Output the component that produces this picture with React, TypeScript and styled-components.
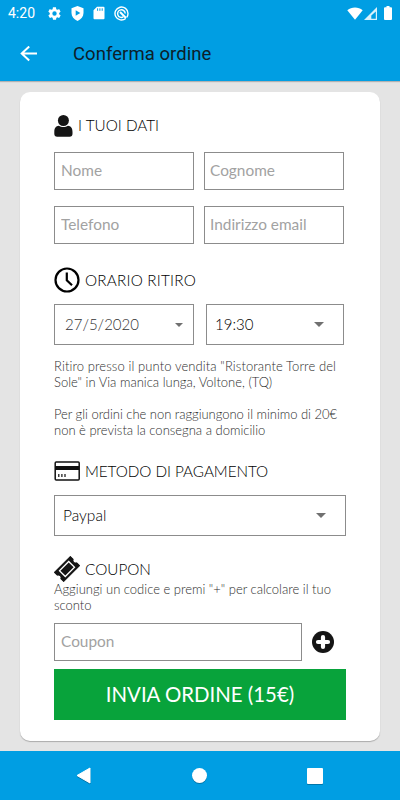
import React from 'react';
import styled, { createGlobalStyle } from 'styled-components';

const GlobalStyle = createGlobalStyle`
  *, *::before, *::after { box-sizing: border-box; }
  body { margin: 0; background: #e4e4e4; }
  input, button { margin: 0; border-radius: 0; font-family: inherit; }
  svg { display: block; flex: none; }
`;

const Screen = styled.div`
  width: 400px;
  height: 800px;
  display: flex;
  flex-direction: column;
  background: #e4e4e4;
  font-family: Lato, sans-serif;
  font-weight: 300;
  overflow: hidden;
`;

const StatusBar = styled.div`
  height: 26px;
  flex: none;
  display: flex;
  align-items: center;
  justify-content: space-between;
  padding: 0 8px;
  background: #009ee3;
  color: #fff;
`;

const StatusGroup = styled.div<{ $gap: number }>`
  display: flex;
  align-items: center;
  gap: ${({ $gap }) => $gap}px;
`;

const Clock = styled.span`
  width: 30px;
  font: 400 14px/16px Roboto, sans-serif;
`;

const AppBar = styled.header`
  height: 55px;
  flex: none;
  display: flex;
  align-items: center;
  gap: 36px;
  padding: 0 20px;
  background: #009ee3;
  box-shadow: 0 1px 1px rgba(0, 0, 0, 0.22);
`;

const Title = styled.h1`
  margin: 0;
  font: 400 18.500px/24px Roboto, sans-serif;
  letter-spacing: 0.05px;
  color: #0d2029;
`;

const Main = styled.main`
  flex: 1;
  padding: 11px 20px 10px;
`;

const Card = styled.form`
  height: 649px;
  padding: 20px 34px 0;
  display: flex;
  flex-direction: column;
  background: #fff;
  border-radius: 10px;
  box-shadow: 0 1px 1px rgba(0, 0, 0, 0.25);
`;

const Section = styled.section<{ $top?: number }>`
  margin-top: ${({ $top = 0 }) => $top}px;
`;

const Heading = styled.h2<{ $height?: number; $spacing?: number }>`
  margin: 0;
  height: ${({ $height = 26 }) => $height}px;
  display: flex;
  align-items: center;
  gap: 5px;
  font-size: 15.300px;
  font-weight: 300;
  line-height: 20px;
  letter-spacing: ${({ $spacing = 0 }) => $spacing}px;
  color: #000;
`;

const HeadingText = styled.span`
  padding-bottom: 1px;
`;

const FieldGrid = styled.div`
  display: grid;
  grid-template-columns: 140px 140px;
  gap: 16px 10px;
  margin-top: 13px;
`;

const Input = styled.input<{ $left?: number }>`
  width: 100%;
  height: 38px;
  padding: 0 5px 3px ${({ $left = 6 }) => $left}px;
  border: 1px solid #8c8c8c;
  background: #fff;
  font-size: 15.400px;
  font-weight: 400;
  outline: none;
  &::placeholder { color: #a2a2a2; opacity: 1; }
`;

const SelectRow = styled.div<{ $columns: string }>`
  display: grid;
  grid-template-columns: ${({ $columns }) => $columns};
  gap: 12px;
  margin-top: 11px;
`;

const Select = styled.button<{ $left: number; $right: number; $size?: number; $color?: string }>`
  width: 100%;
  height: 41px;
  display: flex;
  align-items: center;
  justify-content: space-between;
  padding: 0 ${({ $right }) => $right}px 0 ${({ $left }) => $left}px;
  border: 1px solid #8c8c8c;
  background: #fff;
  color: ${({ $color = '#000' }) => $color};
  font-size: ${({ $size = 15 }) => $size}px;
  font-weight: 300;
`;

const SelectText = styled.span`
  padding-bottom: 1px;
`;

const Note = styled.p<{ $top?: number }>`
  margin: ${({ $top = 0 }) => $top}px -6px 0 0;
  font-size: 13px;
  line-height: 16px;
  color: #2e2e2e;
`;

const NoteLine = styled.span<{ $spacing?: number }>`
  display: block;
  letter-spacing: ${({ $spacing = 0 }) => $spacing}px;
  white-space: nowrap;
`;

const CouponRow = styled.div`
  display: grid;
  grid-template-columns: 248px 22px;
  align-items: center;
  gap: 10px;
  margin-top: 10px;
`;

const IconButton = styled.button`
  padding: 0;
  border: 0;
  background: none;
`;

const Submit = styled.button`
  height: 51px;
  margin-top: 8px;
  flex: none;
  padding: 0 0 1px;
  border: 0;
  background: #08a33b;
  color: #fff;
  font-size: 20.400px;
  font-weight: 400;
`;

const NavBar = styled.nav`
  height: 49px;
  flex: none;
  display: flex;
  align-items: center;
  justify-content: space-between;
  padding: 0 77px 0 76px;
  background: #009ee3;
  svg { filter: drop-shadow(0 1px 0.5px rgba(0, 0, 0, 0.25)); }
`;

const Caret = ({ width = 10 }: { width?: number }) => (
  <svg width={width} height={width / 2} viewBox="0 0 10 5">
    <path d="M0 0h10L5 5z" fill="#707070" />
  </svg>
);

const GearIcon = () => (
  <svg width="15" height="15" viewBox="0 0 24 24" fill="#fff">
    <path d="M19.4 13c.1-.3.1-.7.1-1s0-.7-.1-1l2.100-1.700c.2-.1.200-.4.100-.6l-2-3.500c-.1-.2-.4-.3-.6-.2l-2.500 1c-.5-.4-1.100-.7-1.700-1l-.4-2.600c0-.2-.2-.4-.5-.4h-4c-.2 0-.5.200-.5.400l-.4 2.600c-.6.300-1.200.6-1.700 1l-2.500-1c-.2-.1-.5 0-.6.200l-2 3.500c-.1.200-.1.500.1.600L4.500 11c0 .3-.1.700-.1 1s0 .700.1 1l-2.100 1.700c-.2.100-.2.400-.1.600l2 3.500c.1.200.4.300.6.200l2.500-1c.5.400 1.100.7 1.700 1l.4 2.600c0 .2.300.4.500.4h4c.3 0 .5-.2.500-.4l.4-2.600c.6-.3 1.200-.6 1.700-1l2.500 1c.2.100.5 0 .6-.2l2-3.500c.1-.2.100-.5-.1-.6zM12 15.500a3.500 3.500 0 1 1 0-7 3.500 3.500 0 0 1 0 7z" />
  </svg>
);

const ShieldIcon = () => (
  <svg width="13" height="15" viewBox="0 0 13 15">
    <path d="M6.500 0 12.500 2.300V7c0 3.500-2.400 6.300-6 8C2.900 13.300.5 10.500.5 7V2.300z" fill="#fff" />
    <path d="M4.700 4.300v5.400L9.300 7z" fill="#009ee3" />
  </svg>
);

const SdIcon = () => (
  <svg width="12" height="14" viewBox="0 0 12 14">
    <path d="M4 .8h6.500a1 1 0 0 1 1 1v10.400a1 1 0 0 1-1 1h-9a1 1 0 0 1-1-1V4.300z" fill="#fff" />
    <path d="M4.600 2.300v2.500M6.900 2.300v2.500M9.200 2.300v2.500" stroke="#009ee3" />
  </svg>
);

const TargetIcon = () => (
  <svg width="15" height="15" viewBox="0 0 15 15" fill="none" stroke="#fff">
    <path d="M11.700 12.500A6.500 6.500 0 1 1 14 7.500c0 1.600-.5 2.900-1.300 3.900" strokeWidth="1.400" />
    <path d="M9.300 10.900A3.800 3.800 0 1 1 11.200 7.500" strokeWidth="1.400" />
    <path d="m6 6 6 6" strokeWidth="2" />
  </svg>
);

const WifiIcon = () => (
  <svg width="16" height="13" viewBox="0 0 16 13">
    <path d="M.3 3.300C4.700-.5 11.300-.5 15.700 3.300L8 12.700z" fill="#fff" />
  </svg>
);

const SignalIcon = () => (
  <svg width="13" height="13" viewBox="0 0 13 13">
    <path d="M13 0v13H0z" fill="#fff" opacity=".85" />
    <path d="M11.800 4.500v7.300H7.300V8.500z" fill="#009ee3" />
  </svg>
);

const BatteryIcon = () => (
  <svg width="8" height="14" viewBox="0 0 8 14">
    <path d="M2.500 0h3v1.300H7a1 1 0 0 1 1 1V13a1 1 0 0 1-1 1H1a1 1 0 0 1-1-1V2.300a1 1 0 0 1 1-1h1.500z" fill="#fff" />
  </svg>
);

const BackIcon = () => (
  <svg width="17" height="16" viewBox="0 0 17 16" fill="none" stroke="#fff" strokeWidth="2">
    <path d="M17 7.500H2M9.200.500l-7.500 7 7.500 7" />
  </svg>
);

const PersonIcon = () => (
  <svg width="19" height="22" viewBox="0 0 19 22" fill="#151515">
    <path d="M4.800 10.700C2 10.900.3 12.800.3 17v1.800c0 1.900 1 2.900 2.900 2.900h12.400c1.900 0 2.900-1 2.900-2.900V17c0-4.200-1.700-6.100-4.500-6.300-2.600 1.800-6.600 1.800-9.200 0z" />
    <circle cx="9.400" cy="5.500" r="5.500" />
  </svg>
);

const ClockIcon = () => (
  <svg width="26" height="26" viewBox="0 0 26 26" fill="none" stroke="#000" strokeWidth="2.200">
    <circle cx="13" cy="13" r="11.500" />
    <path d="M12.800 5.500v7.800l5.200 4.900" />
  </svg>
);

const CreditCardIcon = () => (
  <svg width="26" height="20" viewBox="0 0 26 20">
    <rect x="1.200" y="1" width="24" height="18" rx="1" fill="#fff" stroke="#111" strokeWidth="1.500" />
    <path d="M1 5h24v4H1z" fill="#111" />
    <path d="M4.800 13v3M7.900 13v3M11 13v3" stroke="#111" strokeWidth="1.200" />
  </svg>
);

const TicketIcon = () => (
  <svg width="26" height="26" viewBox="0 0 26 26">
    <g transform="rotate(-45 13 13)">
      <path d="M1.800 6.500h22.400v4a2.700 2.700 0 0 0 0 5v4H1.800v-4a2.700 2.700 0 0 0 0-5z" fill="#151515" stroke="#151515" strokeLinejoin="round" />
      <rect x="6.500" y="8.900" width="13" height="8.200" fill="none" stroke="#fff" strokeWidth="1.300" />
    </g>
  </svg>
);

const PlusIcon = () => (
  <svg width="22" height="22" viewBox="0 0 22 22">
    <circle cx="11" cy="11" r="11" fill="#151515" />
    <path d="M11 6v10M6 11h10" stroke="#fff" strokeWidth="4.200" strokeLinecap="round" />
  </svg>
);

export default function App() {
  return (
    <Screen>
      <GlobalStyle />
      <StatusBar>
        <StatusGroup $gap={9}>
          <Clock>4:20</Clock>
          <GearIcon />
          <ShieldIcon />
          <SdIcon />
          <TargetIcon />
        </StatusGroup>
        <StatusGroup $gap={7}>
          <StatusGroup $gap={1}>
            <WifiIcon />
            <SignalIcon />
          </StatusGroup>
          <BatteryIcon />
        </StatusGroup>
      </StatusBar>
      <AppBar>
        <BackIcon />
        <Title>Conferma ordine</Title>
      </AppBar>
      <Main>
        <Card onSubmit={(e) => e.preventDefault()}>
          <Section>
            <Heading $height={27}>
              <PersonIcon />
              <HeadingText>I TUOI DATI</HeadingText>
            </Heading>
            <FieldGrid>
              <Input placeholder="Nome" />
              <Input placeholder="Cognome" $left={5} />
              <Input placeholder="Telefono" />
              <Input placeholder="Indirizzo email" $left={5} />
            </FieldGrid>
          </Section>
          <Section $top={23}>
            <Heading $spacing={0.2}>
              <ClockIcon />
              ORARIO RITIRO
            </Heading>
            <SelectRow $columns="140px 138px">
              <Select type="button" $left={10} $right={10} $color="#333">
                <SelectText>27/5/2020</SelectText>
                <Caret width={8} />
              </Select>
              <Select type="button" $left={8} $right={19}>
                <SelectText>19:30</SelectText>
                <Caret />
              </Select>
            </SelectRow>
            <Note $top={13}>
              <NoteLine $spacing={0.1}>Ritiro presso il punto vendita "Ristorante Torre del</NoteLine>
              <NoteLine>Sole" in Via manica lunga, Voltone, (TQ)</NoteLine>
            </Note>
            <Note $top={16}>
              <NoteLine $spacing={-0.03}>Per gli ordini che non raggiungono il minimo di 20€</NoteLine>
              <NoteLine>non è prevista la consegna a domicilio</NoteLine>
            </Note>
          </Section>
          <Section $top={20}>
            <Heading $spacing={-0.07}>
              <CreditCardIcon />
              METODO DI PAGAMENTO
            </Heading>
            <SelectRow $columns="1fr">
              <Select type="button" $left={8} $right={19} $size={15.5}>
                <SelectText>Paypal</SelectText>
                <Caret />
              </Select>
            </SelectRow>
          </Section>
          <Section $top={20}>
            <Heading $height={25}>
              <TicketIcon />
              COUPON
            </Heading>
            <Note>
              <NoteLine>Aggiungi un codice e premi "+" per calcolare il tuo</NoteLine>
              <NoteLine>sconto</NoteLine>
            </Note>
            <CouponRow>
              <Input placeholder="Coupon" />
              <IconButton type="button" aria-label="+">
                <PlusIcon />
              </IconButton>
            </CouponRow>
          </Section>
          <Submit type="submit">INVIA ORDINE (15€)</Submit>
        </Card>
      </Main>
      <NavBar>
        <svg width="15" height="17" viewBox="0 0 15 17">
          <path d="M14 1v15L1 8.500z" fill="#fff" stroke="#fff" strokeLinejoin="round" />
        </svg>
        <svg width="15" height="15" viewBox="0 0 15 15">
          <circle cx="7.500" cy="7.500" r="7.500" fill="#fff" />
        </svg>
        <svg width="16" height="16" viewBox="0 0 16 16">
          <rect width="16" height="16" rx="1" fill="#fff" />
        </svg>
      </NavBar>
    </Screen>
  );
}
